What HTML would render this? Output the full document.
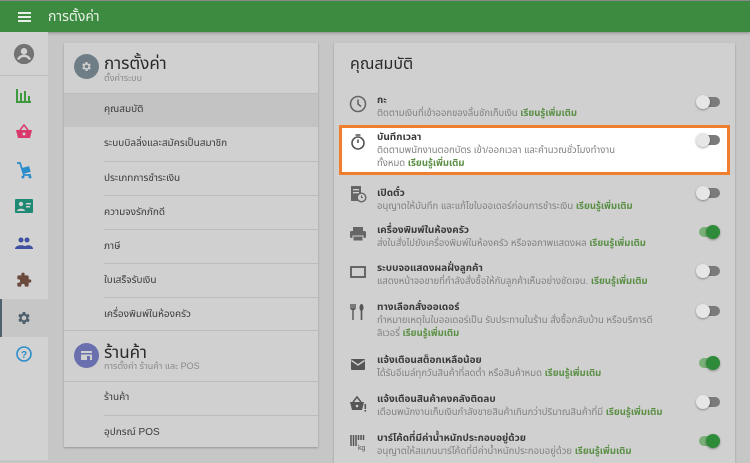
<!DOCTYPE html>
<html><head><meta charset="utf-8"><style>
*{margin:0;padding:0;box-sizing:border-box}
body{width:750px;height:460px;overflow:hidden;background:#c6c6c6;font-family:"Liberation Sans","Noto Sans Thai","Noto Sans CJK SC",sans-serif;position:relative;color:#333}
.abs{position:absolute}
.top{left:0;top:0;width:750px;height:32px;background:#3d8b41;border-top:1px solid #8a8a8a;box-shadow:0 1px 3px rgba(0,0,0,.3)}
.side{left:0;top:32px;width:48px;height:428px;background:#d2d2d2}
.card{background:#d0d0d0;box-shadow:0 1px 2px rgba(0,0,0,.25)}
.row{position:absolute;left:40px;right:0;height:34px;font-size:10px;color:#3a3a3a;line-height:34px;border-top:1px solid #bcbcbc}
.it{position:absolute;left:377px;font-size:10px}
.it b{display:block;font-size:10px;color:#3a3a3a;font-weight:bold;line-height:13px}
.it span{display:block;color:#808080;font-size:9.5px;line-height:13px}
.it i{font-style:normal;color:#5a8f45;font-weight:bold}
.tg{position:absolute;left:696px;width:24px;height:14px}
.tg:before{content:"";position:absolute;left:3px;top:2px;width:21px;height:10px;border-radius:5px;background:#7b7b7b}
.tg:after{content:"";position:absolute;left:0;top:0;width:14px;height:14px;border-radius:7px;background:#e6e6e6;box-shadow:0 1px 2px rgba(0,0,0,.35)}
.tg.on:before{background:#7aaf78}
.tg.on:after{left:10px;background:#2e8b3a}
.ic{position:absolute;left:349px}
</style></head><body>
<div class="abs top">
 <div class="abs" style="left:18px;top:11px;width:13px;height:2px;background:#e8efe8;box-shadow:0 4px 0 #e8efe8,0 8px 0 #e8efe8"></div>
 <div class="abs" style="left:48px;top:6px;font-size:14px;color:#e9f1e9">การตั้งค่า</div>
</div>
<div class="abs side">
 <div class="abs" style="left:0;top:43px;width:48px;height:1px;background:#bdbdbd"></div>
 <svg class="abs" style="left:13px;top:11px" width="22" height="22" viewBox="0 0 24 24"><circle cx="12" cy="12" r="11" fill="#737373"/><circle cx="12" cy="9" r="3.5" fill="#d2d2d2"/><path d="M5.5 18c1.5-3 4-4 6.5-4s5 1 6.5 4" stroke="#d2d2d2" stroke-width="2.6" fill="none"/></svg>
 <svg class="abs" style="left:16px;top:55px" width="16" height="16" viewBox="0 0 16 16"><path d="M1 2v13h14" stroke="#3f9a3f" stroke-width="2" fill="none"/><rect x="4" y="6" width="2" height="8" fill="#3f9a3f"/><rect x="8" y="4" width="2" height="10" fill="#3f9a3f"/><rect x="12" y="9" width="2" height="5" fill="#3f9a3f"/></svg>
 <svg class="abs" style="left:15px;top:92px" width="18" height="16" viewBox="0 0 18 16"><path d="M5 6l4-5 4 5" stroke="#d83a6e" stroke-width="1.6" fill="none"/><path d="M1 6h16l-2 8H3z" fill="#d83a6e"/><circle cx="9" cy="10" r="1.5" fill="#d2d2d2"/></svg>
 <svg class="abs" style="left:15px;top:129px" width="18" height="18" viewBox="0 0 18 18"><path d="M2 2l3 0 4 12h7" stroke="#2b8ccc" stroke-width="1.8" fill="none"/><rect x="8" y="6" width="7" height="6" fill="#2b8ccc" transform="rotate(-15 11 9)"/><circle cx="8" cy="16" r="1.5" fill="#2b8ccc"/><circle cx="15" cy="16" r="1.5" fill="#2b8ccc"/></svg>
 <svg class="abs" style="left:15px;top:167px" width="18" height="14" viewBox="0 0 18 14"><rect width="18" height="14" rx="1" fill="#1e8a74"/><circle cx="6" cy="5" r="2.2" fill="#d2d2d2"/><path d="M2 12c0-3 8-3 8 0z" fill="#d2d2d2"/><rect x="11" y="4" width="5" height="1.5" fill="#d2d2d2"/><rect x="11" y="7" width="4" height="1.5" fill="#d2d2d2"/></svg>
 <svg class="abs" style="left:15px;top:205px" width="18" height="12" viewBox="0 0 18 12"><circle cx="6" cy="3" r="2.5" fill="#3e4fa0"/><circle cx="12" cy="3" r="2.5" fill="#3e4fa0"/><path d="M0 12c0-5 12-5 12 0zM8 12c1-5 10-5 10 0z" fill="#3e4fa0"/></svg>
 <svg class="abs" style="left:16px;top:240px" width="16" height="16" viewBox="0 0 24 24"><path d="M20.5 11H19V7a2 2 0 0 0-2-2h-4V3.5a2.5 2.5 0 0 0-5 0V5H4a2 2 0 0 0-2 2v3.8h1.5a2.7 2.7 0 0 1 0 5.4H2V20a2 2 0 0 0 2 2h3.8v-1.5a2.7 2.7 0 0 1 5.4 0V22H17a2 2 0 0 0 2-2v-4h1.5a2.5 2.5 0 0 0 0-5z" fill="#6b4a3c"/></svg>
 <div class="abs" style="left:0;top:267px;width:48px;height:38px;background:#c6c6c6"></div>
 <div class="abs" style="left:0;top:267px;width:2px;height:38px;background:#4e606b"></div>
 <svg class="abs" style="left:16px;top:278px" width="16" height="16" viewBox="0 0 24 24"><path d="M19.4 13a7.8 7.8 0 0 0 0-2l2.1-1.6-2-3.5-2.5 1a7.3 7.3 0 0 0-1.7-1L15 3h-4l-.4 2.7a7.3 7.3 0 0 0-1.7 1l-2.5-1-2 3.5L6.6 11a7.8 7.8 0 0 0 0 2l-2.1 1.6 2 3.5 2.5-1a7.3 7.3 0 0 0 1.7 1L11 21h4l.4-2.7a7.3 7.3 0 0 0 1.7-1l2.5 1 2-3.5zM13 15.5a3.5 3.5 0 1 1 0-7 3.5 3.5 0 0 1 0 7z" fill="#4e606b" transform="translate(-1 0)"/></svg>
 <svg class="abs" style="left:16px;top:314px" width="16" height="16" viewBox="0 0 16 16"><circle cx="8" cy="8" r="7" stroke="#2b8ccc" stroke-width="1.6" fill="none"/><text x="8" y="12" font-size="10" font-weight="bold" text-anchor="middle" fill="#2b8ccc" font-family="Liberation Sans">?</text></svg>
</div>

<div class="abs card" style="left:64px;top:43px;width:254px;height:404px">
 <svg class="abs" style="left:10px;top:11px" width="25" height="25" viewBox="0 0 25 25"><circle cx="12.5" cy="12.5" r="12.5" fill="#6f7d86"/><g transform="translate(6.5 6.5) scale(.5)"><path d="M19.4 13a7.8 7.8 0 0 0 0-2l2.1-1.6-2-3.5-2.5 1a7.3 7.3 0 0 0-1.7-1L15 3h-4l-.4 2.7a7.3 7.3 0 0 0-1.7 1l-2.5-1-2 3.5L6.6 11a7.8 7.8 0 0 0 0 2l-2.1 1.6 2 3.5 2.5-1a7.3 7.3 0 0 0 1.7 1L11 21h4l.4-2.7a7.3 7.3 0 0 0 1.7-1l2.5 1 2-3.5zM13 15.5a3.5 3.5 0 1 1 0-7 3.5 3.5 0 0 1 0 7z" fill="#d0d0d0" transform="translate(-1 0)"/></g></svg>
 <div class="abs" style="left:40px;top:8px;font-size:17px;color:#2a2a2a">การตั้งค่า</div>
 <div class="abs" style="left:40px;top:29px;font-size:9px;color:#8a8a8a">ตั้งค่าระบบ</div>
 <div class="abs" style="left:0;top:50px;width:254px;height:34px;background:#c3c3c3;border-top:1px solid #bcbcbc"></div>
 <div class="row" style="top:50px;border:none">คุณสมบัติ</div>
 <div class="row" style="top:84px;border:none">ระบบบิลลิ่งและสมัครเป็นสมาชิก</div>
 <div class="row" style="top:118px">ประเภทการชำระเงิน</div>
 <div class="row" style="top:152px">ความจงรักภักดี</div>
 <div class="row" style="top:186px">ภาษี</div>
 <div class="row" style="top:220px">ใบเสร็จรับเงิน</div>
 <div class="row" style="top:254px">เครื่องพิมพ์ในห้องครัว</div>
 <div class="abs" style="left:0;top:287px;width:254px;height:1px;background:#bcbcbc"></div>
 <svg class="abs" style="left:10px;top:300px" width="25" height="25" viewBox="0 0 25 25"><circle cx="12.5" cy="12.5" r="12.5" fill="#6a6fae"/><rect x="7" y="8" width="11" height="9" fill="#d0d0d0"/><rect x="7" y="10" width="11" height="1.5" fill="#6a6fae"/><rect x="13" y="13" width="3" height="4" fill="#6a6fae"/></svg>
 <div class="abs" style="left:40px;top:297px;font-size:17px;color:#2a2a2a">ร้านค้า</div>
 <div class="abs" style="left:40px;top:317px;font-size:9px;color:#8a8a8a">การตั้งค่า ร้านค้า และ POS</div>
 <div class="abs" style="left:0;top:338px;width:254px;height:1px;background:#bcbcbc"></div>
 <div class="row" style="top:338px;border:none">ร้านค้า</div>
 <div class="row" style="top:372px">อุปกรณ์ POS</div>
</div>

<div class="abs card" style="left:334px;top:43px;width:401px;height:420px"></div>
<div class="abs" style="left:350px;top:53px;font-size:16px;color:#2a2a2a">คุณสมบัติ</div>
<div class="abs" style="left:339px;top:125px;width:391px;height:50px;background:#fff;border:3px solid #ef7f2e"></div>

<svg class="ic" style="top:95px" width="18" height="18" viewBox="0 0 18 18"><circle cx="9" cy="9" r="7.5" stroke="#666" stroke-width="1.6" fill="none"/><path d="M9 4.5V9l3 2.5" stroke="#666" stroke-width="1.6" fill="none"/></svg>
<div class="it" style="top:94px"><b>กะ</b><span>ติดตามเงินที่เข้าออกของลิ้นชักเก็บเงิน <i>เรียนรู้เพิ่มเติม</i></span></div>
<div class="tg" style="top:95px"></div>

<svg class="ic" style="top:133px" width="18" height="18" viewBox="0 0 18 18"><circle cx="9" cy="10" r="6" stroke="#555" stroke-width="1.6" fill="none"/><path d="M6.5 2h5M9 10V6.5" stroke="#555" stroke-width="1.6"/></svg>
<div class="it" style="top:131px"><b>บันทึกเวลา</b><span>ติดตามพนักงานตอกบัตร เข้า/ออกเวลา และคำนวณชั่วโมงทำงาน<br>ทั้งหมด <i>เรียนรู้เพิ่มเติม</i></span></div>
<div class="tg" style="top:133px"></div>

<svg class="ic" style="top:185px" width="18" height="18" viewBox="0 0 18 18"><rect x="2" y="1" width="10" height="15" fill="#666"/><rect x="4" y="4" width="6" height="1.3" fill="#d0d0d0"/><rect x="4" y="7" width="6" height="1.3" fill="#d0d0d0"/><circle cx="12.5" cy="12.5" r="4.3" fill="#d0d0d0" stroke="#666" stroke-width="1.4"/><path d="M12.5 10.5v2h1.5" stroke="#666" stroke-width="1.1" fill="none"/></svg>
<div class="it" style="top:187px"><b>เปิดตั๋ว</b><span>อนุญาตให้บันทึก และแก้ไขใบออเดอร์ก่อนการชำระเงิน <i>เรียนรู้เพิ่มเติม</i></span></div>
<div class="tg" style="top:186px"></div>

<svg class="ic" style="top:225px" width="18" height="18" viewBox="0 0 18 18"><rect x="4" y="2" width="10" height="4" fill="#666"/><rect x="1" y="6" width="16" height="7" rx="1.5" fill="#666"/><rect x="4" y="11" width="10" height="5" fill="#666" stroke="#d0d0d0" stroke-width="1"/></svg>
<div class="it" style="top:224px"><b>เครื่องพิมพ์ในห้องครัว</b><span>ส่งใบสั่งไปยังเครื่องพิมพ์ในห้องครัว หรือจอภาพแสดงผล <i>เรียนรู้เพิ่มเติม</i></span></div>
<div class="tg on" style="top:225px"></div>

<svg class="ic" style="top:263px" width="18" height="18" viewBox="0 0 18 18"><rect x="2" y="4" width="14" height="10" stroke="#666" stroke-width="2" fill="none"/></svg>
<div class="it" style="top:262px"><b>ระบบจอแสดงผลฝั่งลูกค้า</b><span>แสดงหน้าจอขายที่กำลังสั่งซื้อให้กับลูกค้าเห็นอย่างชัดเจน. <i>เรียนรู้เพิ่มเติม</i></span></div>
<div class="tg" style="top:264px"></div>

<svg class="ic" style="top:303px" width="18" height="18" viewBox="0 0 18 18"><path d="M4 1v6M2 1v4c0 2 4 2 4 0V1M4 7v10" stroke="#555" stroke-width="1.4" fill="none"/><ellipse cx="12.5" cy="4.5" rx="2" ry="3.5" fill="#555"/><path d="M12.5 7v10" stroke="#555" stroke-width="1.6"/></svg>
<div class="it" style="top:301px"><b>ทางเลือกสั่งออเดอร์</b><span>ทำหมายเหตุในใบออเดอร์เป็น รับประทานในร้าน สั่งซื้อกลับบ้าน หรือบริการดี<br>ลิเวอรี่ <i>เรียนรู้เพิ่มเติม</i></span></div>
<div class="tg" style="top:304px"></div>

<svg class="ic" style="top:356px" width="18" height="18" viewBox="0 0 18 18"><rect x="2" y="3" width="14" height="11" rx="1" fill="#555"/><path d="M2.5 4.5L9 9l6.5-4.5" stroke="#d0d0d0" stroke-width="1.4" fill="none"/></svg>
<div class="it" style="top:354px"><b>แจ้งเตือนสต็อกเหลือน้อย</b><span>ได้รับอีเมล์ทุกวันสินค้าที่ลดต่ำ หรือสินค้าหมด <i>เรียนรู้เพิ่มเติม</i></span></div>
<div class="tg on" style="top:356px"></div>

<svg class="ic" style="top:395px" width="18" height="18" viewBox="0 0 18 18"><path d="M4 7l4-5 4 5" stroke="#555" stroke-width="1.5" fill="none"/><path d="M1 7h14l-2 8H3z" fill="#555"/><circle cx="8" cy="11" r="1.3" fill="#d0d0d0"/><rect x="15.5" y="9" width="1.6" height="5" fill="#555"/><rect x="15.5" y="15" width="1.6" height="1.6" fill="#555"/></svg>
<div class="it" style="top:393px"><b>แจ้งเตือนสินค้าคงคลังติดลบ</b><span>เตือนพนักงานเก็บเงินกำลังขายสินค้าเกินกว่าปริมาณสินค้าที่มี <i>เรียนรู้เพิ่มเติม</i></span></div>
<div class="tg" style="top:395px"></div>

<svg class="ic" style="top:433px" width="18" height="20" viewBox="0 0 18 20"><path d="M2 2v11M4.5 2v11M7 2v11M9.5 2v5M12 2v5M14.5 2v5" stroke="#555" stroke-width="1.5"/><text x="9" y="17" font-size="7" fill="#555" font-family="Liberation Sans">kg</text></svg>
<div class="it" style="top:432px"><b>บาร์โค้ดที่มีค่าน้ำหนักประกอบอยู่ด้วย</b><span>อนุญาตให้สแกนบาร์โค้ดที่มีค่าน้ำหนักประกอบอยู่ด้วย <i>เรียนรู้เพิ่มเติม</i></span></div>
<div class="tg on" style="top:434px"></div>
</body></html>
